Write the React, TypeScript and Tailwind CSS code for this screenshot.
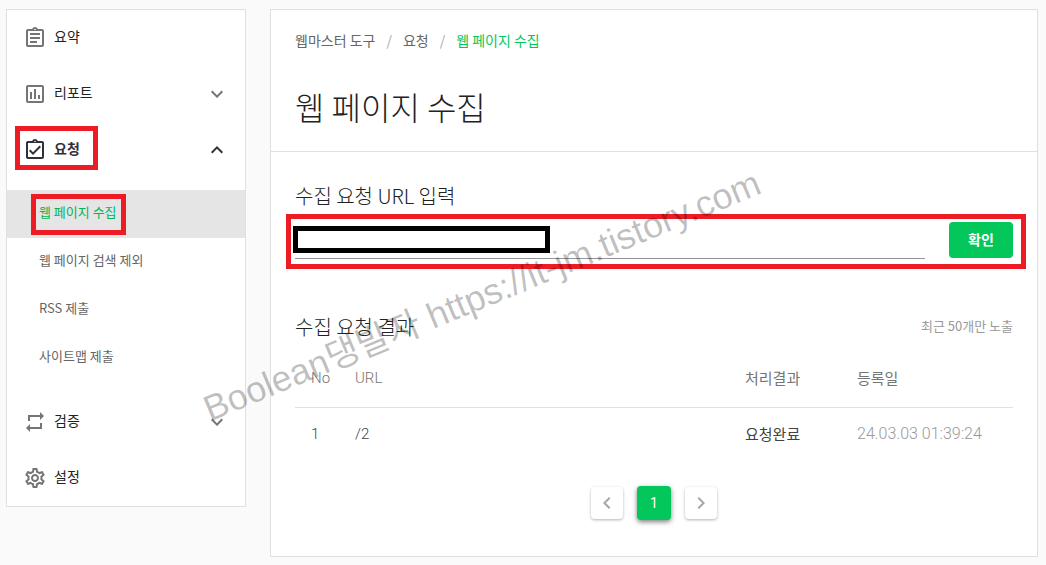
import { useState } from "react";
import type { IconType } from "react-icons";
import {
  MdChevronLeft,
  MdChevronRight,
  MdKeyboardArrowDown,
  MdKeyboardArrowUp,
  MdOutlineAssessment,
  MdOutlineAssignment,
  MdOutlineAssignmentTurnedIn,
  MdOutlineSettings,
  MdRepeat,
} from "react-icons/md";

interface MenuItem {
  label: string;
  icon: IconType;
  arrow?: "down" | "up";
  children?: string[];
}

const menu: MenuItem[] = [
  { label: "요약", icon: MdOutlineAssignment },
  { label: "리포트", icon: MdOutlineAssessment, arrow: "down" },
  {
    label: "요청",
    icon: MdOutlineAssignmentTurnedIn,
    arrow: "up",
    children: ["웹 페이지 수집", "웹 페이지 검색 제외", "RSS 제출", "사이트맵 제출"],
  },
  { label: "검증", icon: MdRepeat, arrow: "down" },
  { label: "설정", icon: MdOutlineSettings },
];

const results = [{ no: 1, url: "/2", status: "요청완료", date: "24.03.03 01:39:24" }];

function MenuRow({ item }: { item: MenuItem }) {
  const open = Boolean(item.children);
  const Icon = item.icon;
  return (
    <li>
      <button
        type="button"
        className={`relative flex h-14 w-full items-center px-4 text-left text-sm ${
          open ? "font-bold text-[#303038]" : "text-[#222]"
        }`}
      >
        <Icon className={`size-6 ${open ? "text-[#303038]" : "text-[#757575]"}`} />
        <span className="ml-[7px] flex-1 pb-1">{item.label}</span>
        {item.arrow === "down" && <MdKeyboardArrowDown className="size-6 text-[#757575]" />}
        {item.arrow === "up" && <MdKeyboardArrowUp className="size-6 text-[#303038]" />}
        {open && <span className="absolute top-1 left-2 h-11 w-[83px] border-5 border-[#ed1c24]" />}
      </button>
      {item.children && (
        <ul className="py-3">
          {item.children.map((c, i) => (
            <li key={c} className={i === 0 ? "relative bg-[#e5e5e5]" : "relative"}>
              <a
                href="#"
                className={`block h-12 pl-8 text-[13px] leading-11 ${i === 0 ? "text-[#03b352]" : "text-[#666]"}`}
              >
                {c}
              </a>
              {i === 0 && (
                <span className="absolute top-1 left-6 h-[41px] w-[95px] border-5 border-[#ed1c24]" />
              )}
            </li>
          ))}
        </ul>
      )}
    </li>
  );
}

export default function App() {
  const [url, setUrl] = useState("");

  return (
    <div className="relative min-h-screen overflow-hidden bg-[#fafafa] font-['Noto_Sans_CJK_KR',sans-serif]">
      <div className="flex items-start gap-6 pt-[9px] pr-2 pb-2 pl-[6px]">
        <nav className="w-60 shrink-0 border border-[#e0e0e0] bg-white">
          <ul>
            {menu.map((m) => (
              <MenuRow key={m.label} item={m} />
            ))}
          </ul>
        </nav>

        <main className="min-w-0 flex-1 border border-[#e0e0e0] bg-white">
          <header className="border-b border-[#e0e0e0] px-6 pt-5 pb-[21px]">
            <ol className="flex gap-[11px] text-sm leading-5 text-[#666]">
              <li>
                <a href="#">웹마스터 도구</a>
              </li>
              <li className="text-[#aaa]">/</li>
              <li>
                <a href="#">요청</a>
              </li>
              <li className="text-[#aaa]">/</li>
              <li className="text-[#03c75a]">웹 페이지 수집</li>
            </ol>
            <h1 className="mt-8 text-[32px] leading-12 font-light text-[#222]">웹 페이지 수집</h1>
          </header>

          <section className="px-6 pt-7">
            <label htmlFor="url" className="block text-xl leading-8 font-light text-[#222]">
              수집 요청 URL 입력
            </label>
            <form className="relative mt-[10px] flex items-start gap-6" onSubmit={(e) => e.preventDefault()}>
              <input
                id="url"
                value={url}
                onChange={(e) => setUrl(e.target.value)}
                className="h-[37px] min-w-0 flex-1 border-b border-[#949494] outline-none"
              />
              <button type="submit" className="h-9 w-16 rounded bg-[#03c75a] pb-[2px] text-sm font-bold text-white">
                확인
              </button>
              <span className="pointer-events-none absolute -top-2 -right-[13px] -left-[9px] h-[55px] border-5 border-[#ed1c24]" />
              <span className="pointer-events-none absolute top-1 -left-[2px] h-[27px] w-[257px] border-5 border-black" />
            </form>
          </section>

          <section className="px-6 pt-[52px] pb-9">
            <div className="flex items-center justify-between">
              <h2 className="text-xl leading-8 font-light text-[#222]">수집 요청 결과</h2>
              <span className="pb-[2px] text-[13px] text-[#999]">최근 50개만 노출</span>
            </div>
            <table className="mt-[5px] w-full table-fixed text-left text-[15px]">
              <thead>
                <tr className="h-[59px] border-b border-[#e0e0e0] text-[#757575]">
                  <th className="w-11 pt-[2px] pl-4 font-['Roboto',sans-serif] font-light">No</th>
                  <th className="pt-[2px] pl-4 font-['Roboto',sans-serif] font-light">URL</th>
                  <th className="w-28 pt-[2px] pl-4 font-normal">처리결과</th>
                  <th className="w-[172px] pt-[2px] pl-4 font-normal">등록일</th>
                </tr>
              </thead>
              <tbody>
                {results.map((r) => (
                  <tr key={r.no} className="h-[52px] text-[#424242]">
                    <td className="pt-[2px] pl-4 font-['Roboto',sans-serif] font-light">{r.no}</td>
                    <td className="pt-[2px] pl-4 font-['Roboto',sans-serif] font-light">{r.url}</td>
                    <td className="pt-[2px] pl-4">{r.status}</td>
                    <td className="pt-[2px] pl-4 font-['Roboto',sans-serif] text-base font-light text-[#999]">
                      {r.date}
                    </td>
                  </tr>
                ))}
              </tbody>
            </table>
            <div className="mt-[27px] flex items-center justify-center gap-[14px]">
              <button
                type="button"
                aria-label="이전"
                className="flex size-8 items-center justify-center rounded bg-white text-[#a6a6a6] shadow-[0_1px_3px_rgba(0,0,0,0.3)]"
              >
                <MdChevronLeft className="size-6" />
              </button>
              <button
                type="button"
                className="size-[34px] rounded bg-[#03c75a] font-['Roboto',sans-serif] text-sm text-white shadow-[0_2px_5px_rgba(0,0,0,0.5)]"
              >
                1
              </button>
              <button
                type="button"
                aria-label="다음"
                className="flex size-8 items-center justify-center rounded bg-white text-[#a6a6a6] shadow-[0_1px_3px_rgba(0,0,0,0.3)]"
              >
                <MdChevronRight className="size-6" />
              </button>
            </div>
          </section>
        </main>
      </div>

      {/* watermark */}
      <div className="pointer-events-none absolute top-[272px] left-[180px] flex w-[604px] -rotate-[22.5deg] justify-center font-['Liberation_Sans','Noto_Sans_CJK_KR',sans-serif] text-[36px] leading-12 whitespace-nowrap text-black/25">
        Boolean댕발자 https://it-jm.tistory.com
      </div>
    </div>
  );
}
